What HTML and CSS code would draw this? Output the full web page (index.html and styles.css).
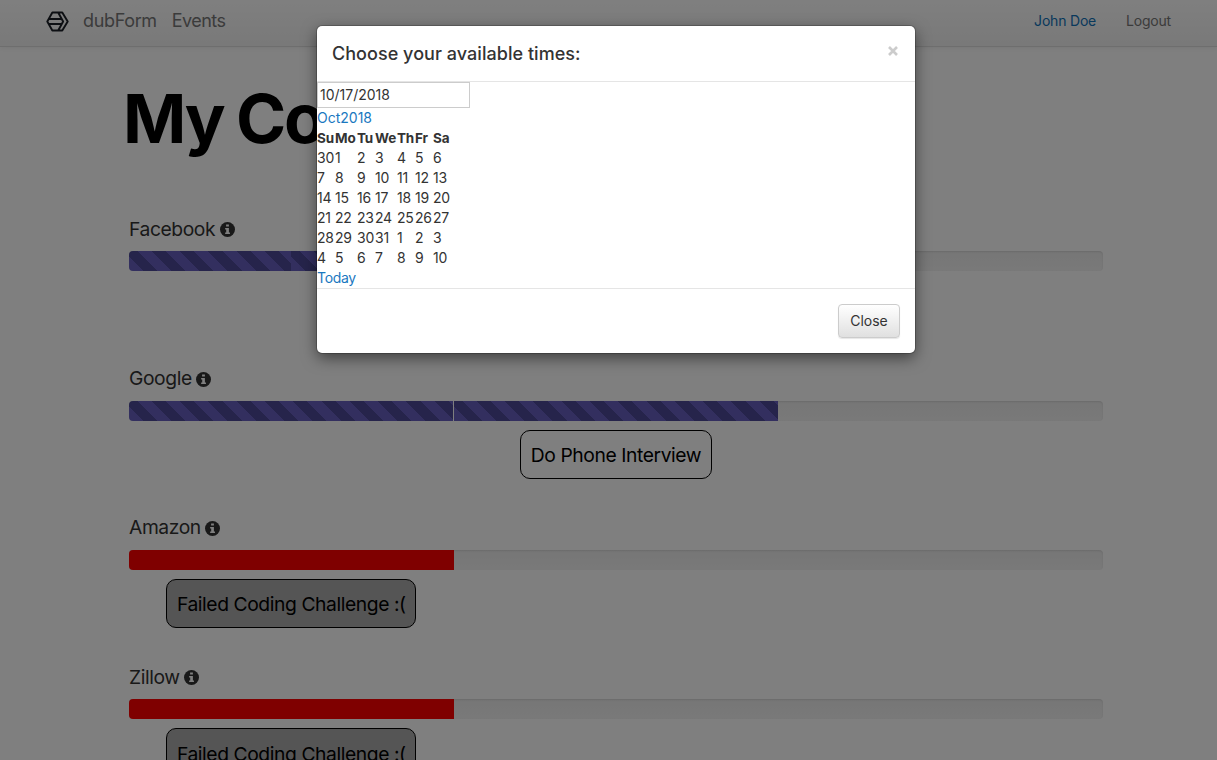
FILE: index.html
```html
<!DOCTYPE html>
<html lang="en">
<head>
<meta charset="utf-8">
<title>dubForm</title>
<link rel="stylesheet" href="styles.css">
</head>
<body>
<svg class="defs" width="0" height="0"><defs>
<symbol id="info" viewBox="0 0 14 14"><circle cx="7" cy="7" r="7" fill="#333"/><path d="M5.7 2.4h2.6v1.9H5.7zM4.8 5.5h3.5v4.3h1v1.5H4.8V9.8h1V7h-1z" fill="#fff"/></symbol>
</defs></svg>
<nav class="navbar">
  <svg class="logo" viewBox="0 0 24 22"><path d="M6.6 1.5h10.4l5.7 9.5-5.7 9.5H6.6L1.3 11z M2.5 8.4h14.2 M2.5 13.6h14.2 M12.7 1.5l5.2 9.5-5.2 9.5"/></svg>
  <a class="brand">dubForm</a>
  <a class="brand events">Events</a>
  <a class="user">John Doe</a>
  <a class="logout">Logout</a>
</nav>
<main class="page">
  <h1>My Companies</h1>
  <section class="row">
    <h2><span>Facebook</span><svg class="info"><use href="#info"/></svg></h2>
    <div class="track"><div class="seg half striped"></div><div class="seg half striped"></div></div>
  </section>
  <section class="row">
    <h2><span>Google</span><svg class="info"><use href="#info"/></svg></h2>
    <div class="track"><div class="seg third striped divided"></div><div class="seg third striped"></div></div>
    <div class="steps"><button class="step second">Do Phone Interview</button></div>
  </section>
  <section class="row">
    <h2><span>Amazon</span><svg class="info"><use href="#info"/></svg></h2>
    <div class="track"><div class="seg third failed"></div></div>
    <div class="steps"><button class="step lost">Failed Coding Challenge :(</button></div>
  </section>
  <section class="row">
    <h2><span>Zillow</span><svg class="info"><use href="#info"/></svg></h2>
    <div class="track"><div class="seg third failed"></div></div>
    <div class="steps"><button class="step lost">Failed Coding Challenge :(</button></div>
  </section>
</main>
<div class="backdrop">
  <div class="modal">
    <header class="modal-head"><h3>Choose your available times:</h3><svg class="close" viewBox="0 0 10 10"><path d="M1 1l8 8M9 1L1 9"/></svg></header>
    <div class="modal-body">
      <input class="date" value="10/17/2018">
      <div class="line"><a class="month">Oct2018</a></div>
      <table class="cal">
        <thead><tr><th>Su</th><th>Mo</th><th>Tu</th><th>We</th><th>Th</th><th>Fr</th><th>Sa</th></tr></thead>
        <tbody>
        <tr><td>30</td><td>1</td><td>2</td><td>3</td><td>4</td><td>5</td><td>6</td></tr>
        <tr><td>7</td><td>8</td><td>9</td><td>10</td><td>11</td><td>12</td><td>13</td></tr>
        <tr><td>14</td><td>15</td><td>16</td><td>17</td><td>18</td><td>19</td><td>20</td></tr>
        <tr><td>21</td><td>22</td><td>23</td><td>24</td><td>25</td><td>26</td><td>27</td></tr>
        <tr><td>28</td><td>29</td><td>30</td><td>31</td><td>1</td><td>2</td><td>3</td></tr>
        <tr><td>4</td><td>5</td><td>6</td><td>7</td><td>8</td><td>9</td><td>10</td></tr>
        </tbody>
      </table>
      <div class="line"><a class="today">Today</a></div>
    </div>
    <footer class="modal-foot"><button class="btn">Close</button></footer>
  </div>
</div>
</body>
</html>
```
FILE: styles.css
```css
* { box-sizing: border-box; }
html, body { margin: 0; height: 760px; overflow: hidden; }
body { background: #fff; color: #333; font: 14px/20px Inter, sans-serif; }
button, input { font-family: inherit; }
.defs { position: absolute; }

.navbar {
  display: flex; align-items: center; height: 47px; padding: 0 46px 4px;
  background: linear-gradient(#fff, #f2f2f2);
  border-bottom: 1px solid #dcdcdc;
  box-shadow: 0 1px 6px rgba(0,0,0,.07);
  color: #777;
}
.logo { width: 23px; height: 21px; margin-right: 14px; fill: none; stroke: #1b1f26; stroke-width: 2; stroke-linejoin: round; }
.brand { font-size: 18px; letter-spacing: -.35px; }
.events { margin-left: 15px; letter-spacing: -.55px; }
.user { margin-left: auto; color: #1172b8; letter-spacing: -.2px; }
.logout { margin-left: 30px; letter-spacing: -.2px; }

.page { height: 713px; overflow: hidden; padding: 38px 114px 0 129px; }
h1 { margin: 0 0 0 -6px; height: 130.3px; font-size: 68px; line-height: 67px; font-weight: 700; letter-spacing: -2.2px; word-spacing: -1.5px; color: #000; white-space: nowrap; }
.row { height: 149.3px; }
.row h2 { display: flex; align-items: center; margin: 0; height: 36px; padding-bottom: 9px; font-size: 19.3px; font-weight: 400; letter-spacing: -.42px; }
.info { width: 15px; height: 15px; margin: 2px 0 0 4.5px; }
.track {
  display: flex; height: 20px; overflow: hidden; border-radius: 4px;
  background: linear-gradient(#ededed, #f3f3f3);
  box-shadow: inset 0 1px 2px rgba(0,0,0,.1);
}
.seg { height: 100%; }
.third { width: 33.333%; }
.half { width: 16.667%; }
.striped { background: repeating-linear-gradient(45deg, #665fbe, #665fbe 10px, #4c4896 10px, #4c4896 20px); }
.divided { border-right: 1px solid #fff; }
.failed { background: #f00; }
.steps { display: grid; grid-template-columns: repeat(3, 1fr); justify-items: center; padding-top: 9px; }
.step { width: 192px; height: 49px; padding: 2px 0 0; border: 1px solid #000; border-radius: 10px; background: #fff; color: #000; font-size: 19.3px; letter-spacing: -.42px; white-space: nowrap; }
.second { grid-column: 2; }
.lost { width: 250px; background: #aaa; }

.backdrop { position: absolute; inset: 0; background: rgba(0,0,0,.5); }
.modal { width: 598px; height: 327px; margin: 26px 0 0 317px; background: #fff; border-radius: 5px; box-shadow: 0 5px 15px rgba(0,0,0,.5), 0 0 0 1px rgba(0,0,0,.2); }
.modal-head { display: flex; justify-content: space-between; align-items: center; height: 56px; padding: 0 17px 0 15px; border-bottom: 1px solid #e5e5e5; }
.modal-head h3 { margin: 0; font-size: 18px; font-weight: 500; letter-spacing: .04px; }
.close { width: 10px; height: 10px; margin-bottom: 5px; stroke: #ccc; stroke-width: 2.6; }
.modal-body { height: 206px; }
.date { display: block; width: 153px; height: 26px; padding: 0 2px 1px; border: 1px solid #ccc; font-size: 14px; color: #333; letter-spacing: 0; }
.line { height: 20px; }
.month, .today { color: #1a78bf; }
.today { letter-spacing: -.3px; }
.cal { width: 134px; table-layout: fixed; border-collapse: collapse; }
.cal th, .cal td { width: 18px; height: 20px; padding: 0; text-align: left; white-space: nowrap; letter-spacing: -.2px; }
.cal th:nth-child(2), .cal th:nth-child(4) { width: 22px; }
.cal th { font-size: 13.5px; font-weight: 700; }
.modal-foot { display: flex; justify-content: flex-end; height: 65px; padding: 15px; border-top: 1px solid #e5e5e5; }
.btn { width: 62px; height: 34px; padding: 0 0 1px; border: 1px solid #ccc; border-radius: 4px; background: linear-gradient(#fff, #e0e0e0); box-shadow: 0 1px 1px rgba(0,0,0,.1); font-size: 14px; color: #333; }
```
